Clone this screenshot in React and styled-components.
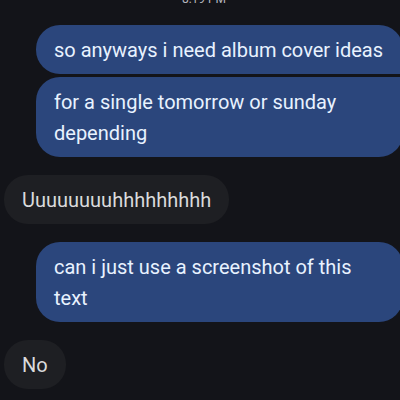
import React from "react";
import styled, { createGlobalStyle } from "styled-components";

const GlobalStyle = createGlobalStyle`
  body {
    margin: 0;
    background: #131419;
    font-family: Roboto, "Liberation Sans", sans-serif;
  }
`;

const Conversation = styled.main`
  display: flex;
  flex-direction: column;
  min-height: 100vh;
  box-sizing: border-box;
  padding: 0 0 8px 4px;
  overflow: hidden;
  background: #131419;
`;

const Timestamp = styled.time`
  padding-left: 4px;
  align-self: center;
  margin: -9px 0 18px;
  font-size: 12px;
  line-height: 16px;
  color: #b4b6bd;
`;

const Group = styled.section`
  display: flex;
  flex-direction: column;
  align-items: ${(p) => (p.$sent ? "stretch" : "flex-start")};
  gap: 3px;
  margin: ${(p) => (p.$sent ? "0 -3px 18px 32px" : "0 0 18px")};

  &:last-child {
    margin-bottom: 0;
  }
`;

const Bubble = styled.p`
  margin: 0;
  padding: ${(p) => (p.$sent ? "10px 16px 8px 18px" : "10px 18px 8px")};
  border-radius: ${(p) => p.$corners || "24px"};
  background: ${(p) => (p.$sent ? "#2b467c" : "#1e1f23")};
  color: ${(p) => (p.$sent ? "#e8f2ff" : "#dadbdc")};
  font-size: 20px;
  line-height: 31px;
`;

export default function App() {
  return (
    <>
      <GlobalStyle />
      <Conversation>
        <Timestamp>8:19 PM</Timestamp>
        <Group $sent>
          <Bubble $sent $corners="24px 24px 4px 24px">
            so anyways i need album cover ideas
          </Bubble>
          <Bubble $sent $corners="24px 4px 24px 24px">
            for a single tomorrow or sunday depending
          </Bubble>
        </Group>
        <Group>
          <Bubble>Uuuuuuuuhhhhhhhhh</Bubble>
        </Group>
        <Group $sent>
          <Bubble $sent>can i just use a screenshot of this text</Bubble>
        </Group>
        <Group>
          <Bubble>No</Bubble>
        </Group>
      </Conversation>
    </>
  );
}
